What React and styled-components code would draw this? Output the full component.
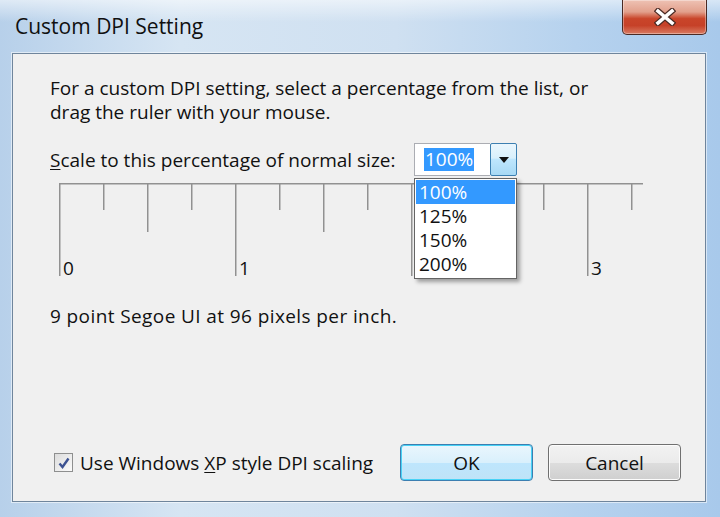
import React from 'react';
import styled, { createGlobalStyle } from 'styled-components';

const Global = createGlobalStyle`
  html, body { margin: 0; padding: 0; }
  body {
    width: 720px; height: 517px; overflow: hidden; background: #fff;
    font-family: "Open Sans", "Noto Sans", sans-serif;
    color: #111;
  }
  * { box-sizing: border-box; }
`;

const Window = styled.div`
  width: 720px; height: 517px;
  display: flex; flex-direction: column;
  padding: 0 14px 15px 12px;
  background:
    linear-gradient(180deg, rgba(255,255,255,0.55) 0px, rgba(255,255,255,0) 22px),
    linear-gradient(90deg, #b7d0ea 0%, #d6e5f3 25%, #cfe0f1 55%, #b6d2ee 80%, #a8c9eb 100%);
`;

const TitleBar = styled.div`
  height: 53px; flex: none;
  display: flex; align-items: flex-start; justify-content: space-between;
`;

const Title = styled.div`
  font-size: 21px; margin: 12px 0 0 3px; color: #101010;
`;

const CloseButton = styled.div`
  width: 85px; height: 35px;
  margin-right: -1px;
  border: 1px solid #4a2a24; border-top: none;
  border-radius: 0 0 5px 5px;
  background: linear-gradient(180deg, #eec2b4 0%, #e2a08c 35%, #c9452a 55%, #c64128 75%, #d97b62 100%);
  box-shadow: inset 0 0 0 1px rgba(255,255,255,0.35);
  display: flex; align-items: center; justify-content: center;
`;

const Client = styled.div`
  flex: 1;
  border: 1px solid #6f859c;
  box-shadow: 0 0 0 1px rgba(255,255,255,0.55);
  background: #f0f0f0;
  padding: 22px 24px 20px 37px;
  display: flex; flex-direction: column;
`;

const Text = styled.div`
  font-size: 19px; line-height: 24px; color: #111; white-space: nowrap;
`;

const ScaleRow = styled.div`
  display: grid; grid-template-columns: 364px 103px;
  align-items: center; margin-top: 19px;
`;

const U = styled.span`text-decoration: underline; text-underline-offset: 2px;`;

const Combo = styled.div`
  position: relative; height: 33px; display: flex;
`;

const ComboField = styled.div`
  flex: 1; background: #fff; border: 1px solid #abadb3; border-right: none;
  display: flex; align-items: center; padding-left: 9px;
`;

const Selected = styled.span`
  background: #3399ff; color: #fff; font-size: 19px; line-height: 23px; padding: 0 1px;
`;

const ComboButton = styled.div`
  width: 27px;
  border: 1px solid #3c7fb1; border-radius: 2px;
  background: linear-gradient(180deg, #eaf6fd 0%, #d9f0fc 45%, #bee6fd 50%, #a7d9f5 100%);
  display: flex; align-items: center; justify-content: center;
`;

const Arrow = styled.div`
  width: 0; height: 0;
  border-left: 5px solid transparent; border-right: 5px solid transparent;
  border-top: 6px solid #111;
`;

const List = styled.div`
  position: absolute; left: 0; top: 35px; width: 103px;
  background: #fff; border: 1px solid #646464;
  box-shadow: 3px 3px 4px rgba(0,0,0,0.35);
  padding: 1px 1px 2px; z-index: 2;
`;

const Item = styled.div`
  font-size: 19px; line-height: 24px; padding-left: 3px;
  background: ${p => (p.$active ? '#3399ff' : 'transparent')};
  color: ${p => (p.$active ? '#fff' : '#111')};
`;

const Ruler = styled.div`
  display: grid; margin: 7px 0 0 9px; width: 584px; height: 97px;
  & > * { grid-area: 1 / 1; }
`;

const RulerLabels = styled.div`
  display: flex; align-self: end;
`;

const RulerLabel = styled.span`
  width: 176px; padding-left: 4px; font-size: 19px; line-height: 24px; color: #111;
  &:last-child { width: auto; }
`;

const Info = styled(Text)`margin-top: 24px; letter-spacing: 0.4px;`;

const Bottom = styled.div`
  margin-top: auto; display: flex; align-items: center;
`;

const Check = styled.label`
  display: flex; align-items: center; gap: 7px; font-size: 19px; margin-left: 4px; white-space: nowrap;
`;

const Box = styled.span`
  width: 19px; height: 19px;
  border: 1px solid #8e8f8f;
  background: linear-gradient(135deg, #dcdcdc, #fbfbfb);
  display: flex; align-items: center; justify-content: center;
`;

const Buttons = styled.div`
  margin-left: auto; display: flex; gap: 15px;
`;

const Button = styled.div`
  width: 133px; height: 37px; border-radius: 4px;
  display: flex; align-items: center; justify-content: center;
  font-size: 19px; color: #111;
  border: 1px solid ${p => (p.$default ? '#3c7fb1' : '#707070')};
  box-shadow: inset 0 0 0 1px ${p => (p.$default ? '#48d2f6' : '#fcfcfc')};
  background: ${p => p.$default
    ? 'linear-gradient(180deg, #eaf6fd 0%, #d9f0fc 50%, #bee6fd 51%, #bfe3f7 100%)'
    : 'linear-gradient(180deg, #f2f2f2 0%, #ebebeb 50%, #dddddd 51%, #cfcfcf 100%)'};
`;

const ticks = Array.from({ length: 14 }, (_, i) => i);
const tickLen = i => (i % 4 === 0 ? 93 : i % 2 === 0 ? 49 : 27);

export default function App() {
  return (
    <>
      <Global />
      <Window>
        <TitleBar>
          <Title>Custom DPI Setting</Title>
          <CloseButton>
            <svg width="22" height="18" viewBox="0 0 22 18">
              <path d="M4 3 L18 15 M18 3 L4 15" stroke="#4a2a24" strokeWidth="6" strokeLinecap="square" />
              <path d="M4 3 L18 15 M18 3 L4 15" stroke="#fff" strokeWidth="3.6" strokeLinecap="square" />
            </svg>
          </CloseButton>
        </TitleBar>
        <Client>
          <Text>
            For a custom DPI setting, select a percentage from the list, or<br />
            drag the ruler with your mouse.
          </Text>
          <ScaleRow>
            <Text><U>S</U>cale to this percentage of normal size:</Text>
            <Combo>
              <ComboField><Selected>100%</Selected></ComboField>
              <ComboButton><Arrow /></ComboButton>
              <List>
                <Item $active>100%</Item>
                <Item>125%</Item>
                <Item>150%</Item>
                <Item>200%</Item>
              </List>
            </Combo>
          </ScaleRow>
          <Ruler>
            <svg width="584" height="97" viewBox="0 0 584 97">
              <line x1="0" y1="0.75" x2="584" y2="0.75" stroke="#919191" strokeWidth="1.5" />
              {ticks.map(i => (
                <line key={i} x1={i * 44 + 0.75} y1="0" x2={i * 44 + 0.75} y2={tickLen(i)} stroke="#919191" strokeWidth="1.5" />
              ))}
            </svg>
            <RulerLabels>
              <RulerLabel>0</RulerLabel>
              <RulerLabel>1</RulerLabel>
              <RulerLabel />
              <RulerLabel>3</RulerLabel>
            </RulerLabels>
          </Ruler>
          <Info>9 point Segoe UI at 96 pixels per inch.</Info>
          <Bottom>
            <Check>
              <Box>
                <svg width="14" height="14" viewBox="0 0 14 14">
                  <path d="M2.5 7.5 L5.5 11 L11.5 2.5" fill="none" stroke="#3d5392" strokeWidth="2.4" />
                </svg>
              </Box>
              <span>Use Windows <U>X</U>P style DPI scaling</span>
            </Check>
            <Buttons>
              <Button $default>OK</Button>
              <Button>Cancel</Button>
            </Buttons>
          </Bottom>
        </Client>
      </Window>
    </>
  );
}
